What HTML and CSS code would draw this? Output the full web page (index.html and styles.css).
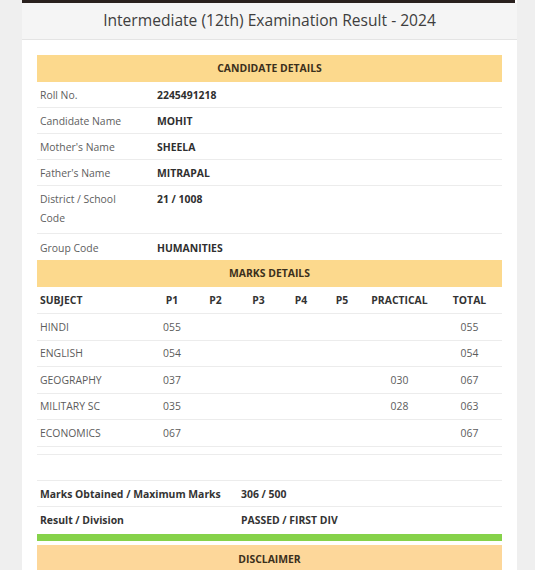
FILE: index.html
```html
<!DOCTYPE html>
<html>
<head>
<meta charset="utf-8">
<link rel="stylesheet" href="styles.css">
</head>
<body>
<div class="panel">
  <div class="topbar"></div>
  <div class="heading">Intermediate (12th) Examination Result - 2024</div>
  <div class="content">
    <div class="bar">CANDIDATE DETAILS</div>
    <table class="info">
      <colgroup><col class="c-label"><col></colgroup>
      <tr><td class="lbl">Roll No.</td><td class="val">2245491218</td></tr>
      <tr><td class="lbl">Candidate Name</td><td class="val">MOHIT</td></tr>
      <tr><td class="lbl">Mother's Name</td><td class="val">SHEELA</td></tr>
      <tr><td class="lbl">Father's Name</td><td class="val">MITRAPAL</td></tr>
      <tr class="tall"><td class="lbl">District / School Code</td><td class="val">21 / 1008</td></tr>
      <tr class="last"><td class="lbl">Group Code</td><td class="val">HUMANITIES</td></tr>
    </table>
    <div class="bar">MARKS DETAILS</div>
    <table class="marks">
      <colgroup>
        <col class="w-sub"><col class="w-p1"><col class="w-p2"><col class="w-p3"><col class="w-p4"><col class="w-p5"><col class="w-pr"><col class="w-tot">
      </colgroup>
      <tr class="head"><td class="sub">SUBJECT</td><td>P1</td><td>P2</td><td>P3</td><td>P4</td><td>P5</td><td>PRACTICAL</td><td>TOTAL</td></tr>
      <tr><td class="sub">HINDI</td><td>055</td><td></td><td></td><td></td><td></td><td></td><td>055</td></tr>
      <tr><td class="sub">ENGLISH</td><td>054</td><td></td><td></td><td></td><td></td><td></td><td>054</td></tr>
      <tr><td class="sub">GEOGRAPHY</td><td>037</td><td></td><td></td><td></td><td></td><td>030</td><td>067</td></tr>
      <tr><td class="sub">MILITARY SC</td><td>035</td><td></td><td></td><td></td><td></td><td>028</td><td>063</td></tr>
      <tr><td class="sub">ECONOMICS</td><td>067</td><td></td><td></td><td></td><td></td><td></td><td>067</td></tr>
      <tr class="spacer"><td colspan="8"></td></tr>
    </table>
    <table class="summary">
      <colgroup><col class="c-sum"><col></colgroup>
      <tr><td>Marks Obtained / Maximum Marks</td><td>306 / 500</td></tr>
      <tr class="last"><td>Result / Division</td><td>PASSED / FIRST DIV</td></tr>
    </table>
    <div class="green"></div>
    <div class="bar disclaimer">DISCLAIMER</div>
  </div>
</div>
</body>
</html>
```

FILE: styles.css
```css
html, body {
  margin: 0;
  padding: 0;
}
body {
  background: #efefef;
  font-family: "Open Sans", "Liberation Sans", sans-serif;
  height: 570px;
  overflow: hidden;
}
.panel {
  margin-left: 22px;
  width: 495px;
  background: #ffffff;
  min-height: 570px;
}
.topbar {
  height: 3px;
  background: #2a211e;
  margin-right: 2px;
}
.heading {
  height: 36px;
  line-height: 34px;
  background: #f5f5f5;
  border-bottom: 1px solid #e4e4e4;
  text-align: center;
  font-size: 15.6px;
  color: #3e3e3e;
}
.content {
  padding: 15px 15px 0 15px;
}
.bar {
  background: #fcd98d;
  text-align: center;
  font-size: 10.4px;
  font-weight: 700;
  color: #3b2f1c;
  line-height: 17px;
  padding: 5px 0;
}
.disclaimer {
  background: #fdd79a;
  margin-top: 4px;
  padding: 6px 0 8px;
}
table {
  width: 100%;
  border-collapse: collapse;
  font-size: 10.4px;
}
td {
  padding: 4px 3px 3px 3px;
  line-height: 18px;
  border-bottom: 1px solid #ececec;
  vertical-align: top;
}
.c-label { width: 117px; }
.info .lbl { color: #5e5e5e; padding-right: 12px; }
.info .val { color: #2f2f2f; font-weight: 700; }
.info .tall td { line-height: 19px; padding-bottom: 5px; }
.info .last td { border-bottom: none; padding-top: 5px; }

.marks td {
  text-align: center;
  color: #5c5c5c;
  padding: 3.5px 3px 4px 3px;
}
.marks td.sub { text-align: left; }
.marks .head td { color: #333333; font-weight: 700; padding-top: 4px; padding-bottom: 4px; }
.marks .spacer td { padding: 0; height: 7px; line-height: 7px; }
.w-sub { width: 113px; }
.w-p1 { width: 44px; }
.w-p2 { width: 43px; }
.w-p3 { width: 43px; }
.w-p4 { width: 42px; }
.w-p5 { width: 40px; }
.w-pr { width: 75px; }
.w-tot { width: 65px; }

.summary {
  margin-top: 25px;
  border-top: 1px solid #ececec;
}
.c-sum { width: 201px; }
.summary td { color: #333333; font-weight: 700; }
.summary .last td { border-bottom: none; padding-bottom: 5px; }
.green {
  height: 7px;
  background: #86d24a;
}
```
